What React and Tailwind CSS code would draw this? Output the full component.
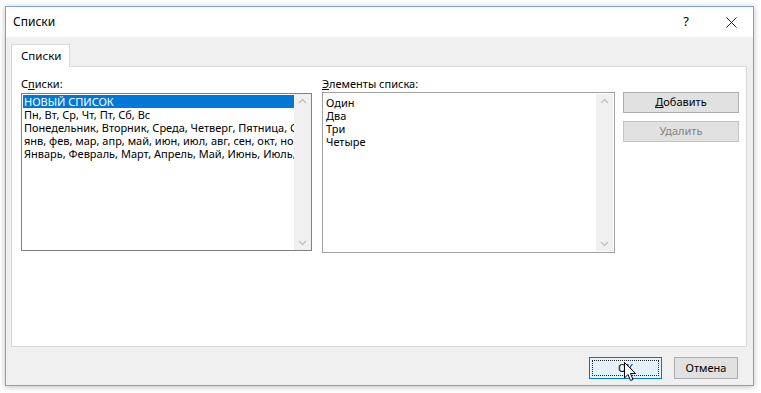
import React from "react";

const Chevron = ({ down }) => (
  <svg width="9" height="6" viewBox="0 0 9 6" className={down ? "rotate-180" : ""}>
    <path d="M1 5 L4.5 1.5 L8 5" fill="none" stroke="#c2c2c2" strokeWidth="1.3" />
  </svg>
);

// vertical scrollbar of a listbox
const ScrollBar = () => (
  <div className="w-[17px] shrink-0 bg-[#f0f0f0] flex flex-col justify-between items-center py-[4px]">
    <Chevron />
    <Chevron down />
  </div>
);

const Cursor = () => (
  <svg
    width="13"
    height="20"
    viewBox="0 0 13 20"
    className="absolute left-[34px] top-[4px]"
  >
    <path
      d="M0.5 0.5 L0.5 16 L4 12.5 L6.5 18.5 L9 17.5 L6.5 11.5 L11.5 11.5 Z"
      fill="#fff"
      stroke="#000"
      strokeWidth="1"
    />
  </svg>
);

const lists = [
  "НОВЫЙ СПИСОК",
  "Пн, Вт, Ср, Чт, Пт, Сб, Вс",
  "Понедельник, Вторник, Среда, Четверг, Пятница, Суббота, Воскресенье",
  "янв, фев, мар, апр, май, июн, июл, авг, сен, окт, ноя, дек",
  "Январь, Февраль, Март, Апрель, Май, Июнь, Июль, Август",
];

const items = ["Один", "Два", "Три", "Четыре"];

export default function App() {
  return (
    <div className="w-[761px] h-[393px] bg-white pt-[6px] pl-[5px] font-['Noto_Sans',sans-serif] text-[11px] text-black">
      <div className="w-[749px] h-[380px] flex flex-col border border-[#7aa2d6] shadow-[0_1px_6px_rgba(0,0,0,0.25)]">
        {/* TITLE BAR */}
        <div className="h-[30px] bg-white flex items-center pl-[7px] pr-[16px] text-[12px]">
          <span className="flex-1">Списки</span>
          <span className="w-[20px] text-center mr-[30px] text-[13px]">?</span>
          <svg width="11" height="11" viewBox="0 0 11 11">
            <path d="M0.5 0.5 L10.5 10.5 M10.5 0.5 L0.5 10.5" stroke="#222" strokeWidth="1" />
          </svg>
        </div>

        {/* BODY */}
        <div className="flex-1 bg-[#f0f0f0] px-[5px] pt-[7px]">
          {/* tab */}
          <div className="w-[59px] h-[23px] bg-white border border-b-0 border-[#d9d9d9] flex items-center pl-[9px] relative z-10 -mb-px text-[11.5px]">
            Списки
          </div>

          {/* tab panel */}
          <div className="w-[736px] h-[281px] bg-white border border-[#d9d9d9] flex pl-[9px] pt-[10px]">
            <div className="w-[291px]">
              <div className="leading-[14px] mb-[2px]">
                С<span className="underline">п</span>иски:
              </div>
              <div className="h-[158px] border border-[#828282] flex">
                <ul className="flex-1 overflow-hidden pt-[1px] pl-[1px]">
                  {lists.map((l, i) => (
                    <li
                      key={i}
                      className={`h-[13px] leading-[13px] whitespace-nowrap pl-[1px] ${
                        i === 0 ? "bg-[#0078d7] text-white" : ""
                      }`}
                    >
                      {l}
                    </li>
                  ))}
                </ul>
                <ScrollBar />
              </div>
            </div>

            <div className="w-[293px] ml-[10px]">
              <div className="leading-[14px] mb-[1px]">
                <span className="underline">Э</span>лементы списка:
              </div>
              <div className="h-[161px] border border-[#a0a0a0] flex">
                <ul className="flex-1 pt-[3px] pl-[3px]">
                  {items.map((t, i) => (
                    <li key={i} className="h-[13px] leading-[13px]">
                      {t}
                    </li>
                  ))}
                </ul>
                <div className="flex py-[1px] pr-[1px]">
                  <ScrollBar />
                </div>
              </div>
            </div>

            <div className="ml-[8px] mt-[15px] flex flex-col gap-[8px]">
              <button className="w-[116px] h-[21px] bg-[#e1e1e1] border border-[#adadad]">
                <span className="underline">Д</span>обавить
              </button>
              <button className="w-[116px] h-[21px] bg-[#e1e1e1] border border-[#c4c4c4] text-[#838383]">
                Удалить
              </button>
            </div>
          </div>

          {/* bottom buttons */}
          <div className="w-[736px] flex justify-end gap-[12px] pr-[9px] mt-[10px]">
            <button className="relative w-[73px] h-[22px] bg-[#e5f1fb] border border-[#0078d7] p-[2px]">
              <div className="w-full h-full border border-dotted border-[#222] flex items-center justify-center">
                ОК
              </div>
              <Cursor />
            </button>
            <button className="w-[64px] h-[22px] bg-[#e1e1e1] border border-[#adadad]">
              Отмена
            </button>
          </div>
        </div>
      </div>
    </div>
  );
}
